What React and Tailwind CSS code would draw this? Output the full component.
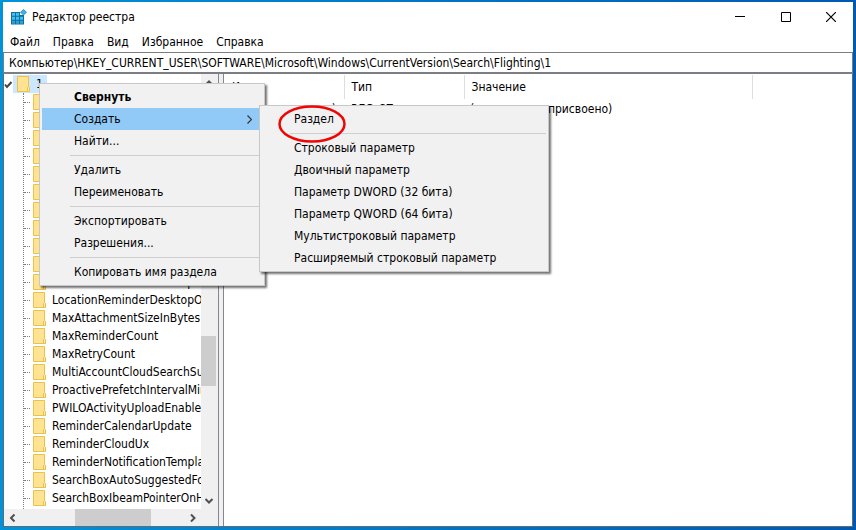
import React from "react";

const valueNames = [
  "", "", "", "", "", "", "", "", "", "",
  "LocationReminderDesktop",
  "LocationReminderDesktopOnly",
  "MaxAttachmentSizeInBytes",
  "MaxReminderCount",
  "MaxRetryCount",
  "MultiAccountCloudSearchSupport",
  "ProactivePrefetchIntervalMinutes",
  "PWILOActivityUploadEnabled",
  "ReminderCalendarUpdate",
  "ReminderCloudUx",
  "ReminderNotificationTemplate",
  "SearchBoxAutoSuggestedFocus",
  "SearchBoxIbeamPointerOnHover",
];

const contextItems = [
  { label: "Свернуть", bold: true },
  { label: "Создать", active: true },
  { label: "Найти..." },
  null,
  { label: "Удалить" },
  { label: "Переименовать" },
  null,
  { label: "Экспортировать" },
  { label: "Разрешения..." },
  null,
  { label: "Копировать имя раздела" },
];

const createItems = [
  { label: "Раздел" },
  null,
  { label: "Строковый параметр" },
  { label: "Двоичный параметр" },
  { label: "Параметр DWORD (32 бита)" },
  { label: "Параметр QWORD (64 бита)" },
  { label: "Мультистроковый параметр" },
  { label: "Расширяемый строковый параметр" },
];

function Folder() {
  return (
    <svg width="14" height="18" viewBox="0 0 14 18" className="shrink-0" aria-hidden="true">
      <path d="M.5 1.500h11v10l1 1v4H.5z" fill="#ffe699" stroke="#e9c14b" />
      <path d="M1.500 2.500h9v13h-9z" fill="#ffe391" />
      <path d="M10.500 16.500v-4l1-1 1 1v4z" fill="#ffe9a6" stroke="#e9c14b" />
    </svg>
  );
}

function Arrow({ d, label, className }) {
  return (
    <button type="button" aria-label={label} className={`flex items-center justify-center ${className}`}>
      <svg width="10" height="10" viewBox="0 0 10 10" fill="none" stroke="#505050" strokeWidth="2" aria-hidden="true">
        <path d={d} />
      </svg>
    </button>
  );
}

function AppIcon() {
  return (
    <svg width="16" height="16" viewBox="0 0 16 16" aria-hidden="true">
      <path d="M0 3h9v3h4v9.500H0z" fill="#0f6d9f" />
      <path d="M1 4h3v2.700H1zM5 4h3v2.700H5zM1 7.700h3v3H1zM5 7.700h3v3H5zM9 7.700h3v3H9z" fill="#3fc0ee" />
      <path d="M1 11.700h3v3H1zM5 11.700h3v3H5zM9 11.700h3v3H9z" fill="#2aa3d6" />
      <path d="M12.500 .5 15.500 3.300 12.500 6.100 9.500 3.300z" fill="#3fb4e4" stroke="#1679ab" strokeWidth=".7" />
    </svg>
  );
}

function Menu({ items, label, className }) {
  return (
    <div
      role="menu"
      aria-label={label}
      className={`absolute border border-[#c8c8c8] bg-[#f1f1f1] py-0.5 shadow-[2px_2px_2px_rgba(0,0,0,0.55)] ${className}`}
    >
      {items.map((item, i) =>
        item ? (
          <button
            key={item.label}
            type="button"
            role="menuitem"
            className={`mx-0.5 flex h-[22px] w-[calc(100%-4px)] items-center justify-between pr-2.5 pl-8 whitespace-nowrap ${
              item.active ? "bg-[#91c9f7]" : ""
            } ${item.bold ? "font-bold" : ""}`}
          >
            {item.label}
            {item.active && (
              <svg width="5" height="9" viewBox="0 0 5 9" fill="none" stroke="#333" strokeWidth="1.200" aria-hidden="true">
                <path d="M.5.5l4 4-4 4" />
              </svg>
            )}
          </button>
        ) : (
          <div key={i} role="separator" className="mr-0.5 ml-[30px] flex h-[7px] items-center">
            <div className="h-px w-full bg-[#cfcfcf]" />
          </div>
        )
      )}
    </div>
  );
}

export default function App() {
  return (
    <div className="relative flex h-screen flex-col bg-linear-to-r from-[#0093d8] to-[#0059b0] px-[3px] pt-0.5 pb-[3px] font-['DejaVu_Sans_Condensed','Open_Sans',sans-serif] text-xs text-black">
      <div className="flex min-h-0 flex-1 flex-col bg-white">
        <header className="flex h-[30px] shrink-0 items-center pl-2">
          <AppIcon />
          <h1 className="ml-[5px] flex-1">Редактор реестра</h1>
          <button type="button" aria-label="Свернуть окно" className="flex h-full w-[46px] items-center justify-center">
            <svg width="10" height="10" viewBox="0 0 10 10" stroke="#000" aria-hidden="true"><path d="M0 4.500h10" /></svg>
          </button>
          <button type="button" aria-label="Развернуть окно" className="flex h-full w-[46px] items-center justify-center">
            <svg width="10" height="10" viewBox="0 0 10 10" fill="none" stroke="#000" aria-hidden="true"><path d="M.5.5h9v9h-9z" /></svg>
          </button>
          <button type="button" aria-label="Закрыть" className="flex h-full w-11 items-center justify-center">
            <svg width="10" height="10" viewBox="0 0 10 10" stroke="#000" strokeWidth="1.200" aria-hidden="true"><path d="M0 0l10 10M10 0L0 10" /></svg>
          </button>
        </header>
        <nav className="flex h-5 shrink-0 items-center gap-[13px] pl-[7px]">
          {["Файл", "Правка", "Вид", "Избранное", "Справка"].map((name) => (
            <button key={name} type="button">{name}</button>
          ))}
        </nav>
        <input
          type="text"
          aria-label="Адрес"
          defaultValue="Компьютер\HKEY_CURRENT_USER\SOFTWARE\Microsoft\Windows\CurrentVersion\Search\Flighting\1"
          className="h-[22px] w-full shrink-0 border border-b-2 border-[#7b7e85] bg-white pl-[5px] outline-none"
        />
        <main className="flex min-h-0 flex-1 border border-t-0 border-[#5f6b78]">
          <section className="flex w-[215px] shrink-0 flex-col border-r border-[#828790]">
            <div className="flex min-h-0 flex-1">
              <div className="min-w-0 flex-1 overflow-hidden">
                <div className="flex h-[19px] items-center pt-px">
                  <svg width="9" height="9" viewBox="0 0 9 9" fill="none" stroke="#444" strokeWidth="2" aria-hidden="true">
                    <path d="M1 4.500 3 7l4.500-5" />
                  </svg>
                  <div className="flex h-[18px] items-center gap-[5px] bg-[#cce8ff] px-1">
                    <Folder />
                    <span>1</span>
                  </div>
                </div>
                <ul className="ml-[19px] border-l border-dotted border-[#808080] pb-1">
                  {valueNames.map((name, i) => (
                    <li key={i} className="flex h-[18px] items-center whitespace-nowrap">
                      <span className="mr-[3px] w-1.5 shrink-0 border-t border-dotted border-[#808080]" />
                      <Folder />
                      <span className="ml-[5px]">{name}</span>
                    </li>
                  ))}
                </ul>
              </div>
              <div className="flex w-[15px] shrink-0 flex-col bg-[#f0f0f0]">
                <Arrow label="Прокрутить вверх" d="M1.500 7 5 3.500 8.500 7" className="h-[17px]" />
                <div className="flex-[245]" />
                <div className="h-[50px] bg-[#cdcdcd]" />
                <div className="flex-[106]" />
                <Arrow label="Прокрутить вниз" d="M1.500 3 5 6.500 8.500 3" className="h-[17px]" />
              </div>
              <div className="w-0.5 bg-[#f0f0f0]" />
            </div>
            <div className="flex h-[17px] shrink-0 bg-[#f0f0f0] pr-[17px]">
              <Arrow label="Прокрутить влево" d="M6.500 1.500 3 5l3.500 3.500" className="w-[17px]" />
              <div className="flex-[54]" />
              <div className="w-[76px] bg-[#cdcdcd]" />
              <div className="flex-[33]" />
              <Arrow label="Прокрутить вправо" d="M3 1.500 6.500 5 3 8.500" className="w-[17px]" />
            </div>
          </section>
          <div className="w-1 shrink-0 bg-[#f0f0f0]" />
          <section className="min-w-0 flex-1 border-l border-[#828790] pt-px">
            <table className="w-full table-fixed border-collapse text-left">
              <thead>
                <tr className="h-6">
                  <th className="w-[120px] border-r border-[#dedede] pl-2 font-normal">Имя</th>
                  <th className="w-[120px] border-r border-[#dedede] pl-[7px] font-normal">Тип</th>
                  <th className="w-72 border-r border-[#dedede] pl-[7px] font-normal">Значение</th>
                  <th aria-label="Пусто" />
                </tr>
              </thead>
              <tbody>
                <tr className="h-5">
                  <td className="pr-2 text-right whitespace-nowrap">(По умолчанию)</td>
                  <td className="pl-[7px]">REG_SZ</td>
                  <td className="pl-1.5 whitespace-nowrap">(значение не присвоено)</td>
                  <td />
                </tr>
              </tbody>
            </table>
          </section>
        </main>
      </div>

      <Menu items={contextItems} label="Раздел реестра" className="top-[83px] left-[39px] w-[226px]" />
      <Menu items={createItems} label="Создать" className="top-[105px] left-[259px] w-[290px]" />
      <svg className="pointer-events-none absolute top-[104px] left-[277px]" width="70" height="40" viewBox="0 0 70 40" fill="none" aria-hidden="true">
        <ellipse cx="35" cy="20" rx="32.500" ry="17.500" stroke="#f00505" strokeWidth="2.500" />
      </svg>
    </div>
  );
}
